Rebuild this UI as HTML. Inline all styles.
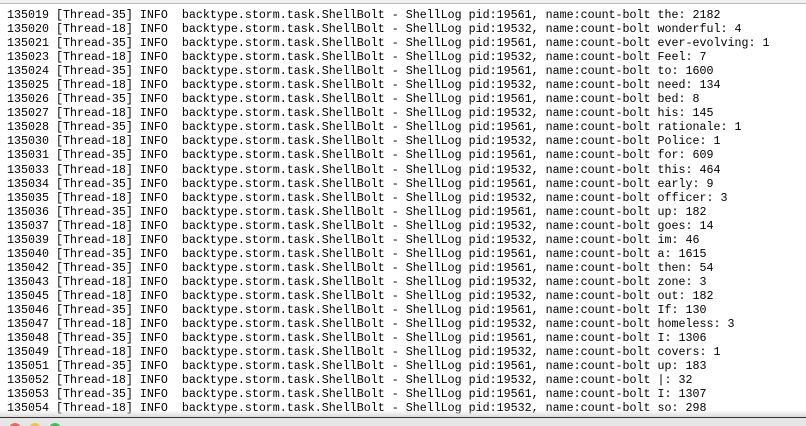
<!DOCTYPE html>
<html><head><meta charset="utf-8"><style>
html,body{margin:0;padding:0;width:806px;height:425px;overflow:hidden;background:#fff;}
.top{position:absolute;left:0;top:0;width:806px;height:3px;background:#f0f0f0;border-bottom:1px solid #b8b8b8;}
pre{position:absolute;left:7px;top:8px;margin:0;font-family:"Liberation Mono",monospace;font-size:11.67px;line-height:14.04px;color:#000;}
.shadow{position:absolute;left:0;top:410px;width:806px;height:7px;background:linear-gradient(#fff0,#dcdcdc);}
.bot{position:absolute;left:0;top:417px;width:806px;height:8px;background:#e6e6e6;border-top:1px solid #333;overflow:hidden;}
.c{position:absolute;top:5px;width:12px;height:12px;border-radius:50%;}
</style></head><body>
<div class="top"></div>
<pre>135019 [Thread-35] INFO  backtype.storm.task.ShellBolt - ShellLog pid:19561, name:count-bolt the: 2182
135020 [Thread-18] INFO  backtype.storm.task.ShellBolt - ShellLog pid:19532, name:count-bolt wonderful: 4
135021 [Thread-35] INFO  backtype.storm.task.ShellBolt - ShellLog pid:19561, name:count-bolt ever-evolving: 1
135023 [Thread-18] INFO  backtype.storm.task.ShellBolt - ShellLog pid:19532, name:count-bolt Feel: 7
135024 [Thread-35] INFO  backtype.storm.task.ShellBolt - ShellLog pid:19561, name:count-bolt to: 1600
135025 [Thread-18] INFO  backtype.storm.task.ShellBolt - ShellLog pid:19532, name:count-bolt need: 134
135026 [Thread-35] INFO  backtype.storm.task.ShellBolt - ShellLog pid:19561, name:count-bolt bed: 8
135027 [Thread-18] INFO  backtype.storm.task.ShellBolt - ShellLog pid:19532, name:count-bolt his: 145
135028 [Thread-35] INFO  backtype.storm.task.ShellBolt - ShellLog pid:19561, name:count-bolt rationale: 1
135030 [Thread-18] INFO  backtype.storm.task.ShellBolt - ShellLog pid:19532, name:count-bolt Police: 1
135031 [Thread-35] INFO  backtype.storm.task.ShellBolt - ShellLog pid:19561, name:count-bolt for: 609
135033 [Thread-18] INFO  backtype.storm.task.ShellBolt - ShellLog pid:19532, name:count-bolt this: 464
135034 [Thread-35] INFO  backtype.storm.task.ShellBolt - ShellLog pid:19561, name:count-bolt early: 9
135035 [Thread-18] INFO  backtype.storm.task.ShellBolt - ShellLog pid:19532, name:count-bolt officer: 3
135036 [Thread-35] INFO  backtype.storm.task.ShellBolt - ShellLog pid:19561, name:count-bolt up: 182
135037 [Thread-18] INFO  backtype.storm.task.ShellBolt - ShellLog pid:19532, name:count-bolt goes: 14
135039 [Thread-18] INFO  backtype.storm.task.ShellBolt - ShellLog pid:19532, name:count-bolt im: 46
135040 [Thread-35] INFO  backtype.storm.task.ShellBolt - ShellLog pid:19561, name:count-bolt a: 1615
135042 [Thread-35] INFO  backtype.storm.task.ShellBolt - ShellLog pid:19561, name:count-bolt then: 54
135043 [Thread-18] INFO  backtype.storm.task.ShellBolt - ShellLog pid:19532, name:count-bolt zone: 3
135045 [Thread-18] INFO  backtype.storm.task.ShellBolt - ShellLog pid:19532, name:count-bolt out: 182
135046 [Thread-35] INFO  backtype.storm.task.ShellBolt - ShellLog pid:19561, name:count-bolt If: 130
135047 [Thread-18] INFO  backtype.storm.task.ShellBolt - ShellLog pid:19532, name:count-bolt homeless: 3
135048 [Thread-35] INFO  backtype.storm.task.ShellBolt - ShellLog pid:19561, name:count-bolt I: 1306
135049 [Thread-18] INFO  backtype.storm.task.ShellBolt - ShellLog pid:19532, name:count-bolt covers: 1
135051 [Thread-35] INFO  backtype.storm.task.ShellBolt - ShellLog pid:19561, name:count-bolt up: 183
135052 [Thread-18] INFO  backtype.storm.task.ShellBolt - ShellLog pid:19532, name:count-bolt |: 32
135053 [Thread-35] INFO  backtype.storm.task.ShellBolt - ShellLog pid:19561, name:count-bolt I: 1307
135054 [Thread-18] INFO  backtype.storm.task.ShellBolt - ShellLog pid:19532, name:count-bolt so: 298</pre>
<div class="shadow"></div>
<div class="bot">
<div class="c" style="left:9px;background:#fc605c"></div>
<div class="c" style="left:29px;background:#fdbc40"></div>
<div class="c" style="left:49px;background:#34c84a"></div>
</div>
</body></html>
